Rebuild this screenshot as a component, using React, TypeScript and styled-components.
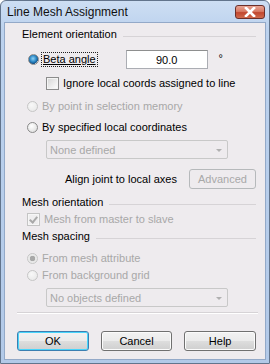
import React from 'react'
import styled, { createGlobalStyle } from 'styled-components'

const GlobalStyle = createGlobalStyle`
	html, body {
		margin: 0;
		padding: 0;
		background: #ffffff;
	}
	* {
		box-sizing: border-box;
	}
`

const COLOR = {
	BODY: '#eeebee',
	TEXT: '#000000',
	DISABLED: '#a8a8a8',
	FRAME: '#b4cbe8',
	EDGE: '#62748c',
	LINE: '#d6d3d6'
}

export default function App() {
	return (
		<>
			<GlobalStyle />
			<Window>
				<TitleBar>
					<Title>Line Mesh Assignment</Title>
					<CloseButton>
						<svg width="12" height="10" viewBox="0 0 12 10">
							<path d="M2 1 L10 9 M10 1 L2 9" stroke="#ffffff" strokeWidth="2.6" strokeLinecap="square" />
						</svg>
					</CloseButton>
				</TitleBar>
				<Body>
					<Header $mt={4}>Element orientation</Header>

					<Row $mt={9} $indent={23} $h={19}>
						<Radio $checked />
						<FocusLabel>Beta angle</FocusLabel>
						<AngleInput>90.0</AngleInput>
						<Degree>°</Degree>
					</Row>
					<Row $mt={7} $indent={41}>
						<Checkbox />
						<Label>Ignore local coords assigned to line</Label>
					</Row>
					<Row $mt={9} $indent={22}>
						<Radio $disabled />
						<Label $disabled>By point in selection memory</Label>
					</Row>
					<Row $mt={7} $indent={22}>
						<Radio />
						<Label>By specified local coordinates</Label>
					</Row>
					<Row $mt={6} $indent={41} $h={19}>
						<Dropdown>
							<span>None defined</span>
							<Arrow />
						</Dropdown>
					</Row>
					<Row $mt={10} $indent={56} $h={20}>
						<Label $gap={12}>Align joint to local axes</Label>
						<SmallButton>Advanced</SmallButton>
					</Row>

					<Header $mt={6}>Mesh orientation</Header>
					<Row $mt={3} $indent={22}>
						<Checkbox $checked $disabled />
						<Label $disabled>Mesh from master to slave</Label>
					</Row>

					<Header $mt={3}>Mesh spacing</Header>
					<Row $mt={8} $indent={22}>
						<Radio $checked $disabled />
						<Label $disabled>From mesh attribute</Label>
					</Row>
					<Row $mt={3} $indent={22}>
						<Radio $disabled />
						<Label $disabled>From background grid</Label>
					</Row>
					<Row $mt={6} $indent={41} $h={19}>
						<Dropdown>
							<span>No objects defined</span>
							<Arrow />
						</Dropdown>
					</Row>

					<Separator />

					<ButtonRow>
						<DialogButton $default>OK</DialogButton>
						<DialogButton>Cancel</DialogButton>
						<DialogButton>Help</DialogButton>
					</ButtonRow>
				</Body>
			</Window>
		</>
	)
}

const Window = styled.div`
	width: 270px;
	height: 364px;
	display: flex;
	flex-direction: column;
	border: 1px solid ${COLOR.EDGE};
	border-radius: 6px 6px 0 0;
	background: linear-gradient(180deg, #cddef3 0%, #bcd2ee 8%, #b2c9e8 100%);
	padding: 0 3px 3px;
	font-family: 'Liberation Sans', Arial, sans-serif;
	font-size: 11px;
	color: ${COLOR.TEXT};
`

const TitleBar = styled.div`
	height: 21px;
	flex: none;
	display: flex;
	align-items: center;
	justify-content: space-between;
	padding: 0 1px 0 3px;
`

const Title = styled.div`
	font-size: 12px;
	color: #101010;
	margin-top: 1px;
`

const CloseButton = styled.div`
	width: 30px;
	height: 14px;
	margin-top: 1px;
	display: flex;
	align-items: center;
	justify-content: center;
	border: 1px solid #6b2f2a;
	border-radius: 3px;
	background: linear-gradient(180deg, #e8a493 0%, #d87a64 45%, #c2472f 55%, #cf6a4d 100%);
`

const Body = styled.div`
	flex: 1;
	display: flex;
	flex-direction: column;
	background: ${COLOR.BODY};
	border: 1px solid #93a9c8;
	padding-left: 17px;
	padding-right: 9px;
`

const Header = styled.div<{ $mt: number }>`
	height: 14px;
	margin-top: ${({ $mt }) => $mt}px;
	display: flex;
	align-items: center;
	gap: 6px;
	white-space: nowrap;
	&::after {
		content: '';
		flex: 1;
		height: 1px;
		margin-top: 5px;
		background: ${COLOR.LINE};
	}
`

const Row = styled.div<{ $mt: number; $indent: number; $h?: number }>`
	height: ${({ $h }) => $h ?? 14}px;
	margin-top: ${({ $mt }) => $mt}px;
	padding-left: ${({ $indent }) => $indent - 17}px;
	display: flex;
	align-items: center;
	white-space: nowrap;
`

const Label = styled.span<{ $disabled?: boolean; $gap?: number }>`
	color: ${({ $disabled }) => ($disabled ? COLOR.DISABLED : COLOR.TEXT)};
	margin-left: 4px;
	margin-right: ${({ $gap }) => $gap ?? 0}px;
`

const FocusLabel = styled.span`
	margin-left: 3px;
	padding: 0 1px;
	height: 13px;
	line-height: 12px;
	outline: 1px dotted #202020;
	text-decoration: underline;
	text-decoration-thickness: 1px;
	text-underline-offset: 1px;
`

const Radio = styled.span<{ $checked?: boolean; $disabled?: boolean }>`
	width: 11px;
	height: 11px;
	flex: none;
	border-radius: 50%;
	border: 1px solid ${({ $disabled }) => ($disabled ? '#c6c6c6' : '#8a8a8a')};
	background: ${({ $checked, $disabled }) =>
		$checked && !$disabled
			? 'radial-gradient(circle at 45% 40%, #8fd3f7 0%, #2a86c4 45%, #124f86 70%, #e4e4e4 72%, #f6f6f6 100%)'
			: $checked && $disabled
			? 'radial-gradient(circle at 50% 50%, #a8a8a8 0%, #a8a8a8 42%, #e6e6e6 46%, #f4f4f4 100%)'
			: $disabled
			? 'radial-gradient(circle at 40% 35%, #f8f8f8 0%, #e6e6e6 100%)'
			: 'radial-gradient(circle at 40% 35%, #ffffff 0%, #d8d8d8 100%)'};
`

const Checkbox = styled.span<{ $checked?: boolean; $disabled?: boolean }>`
	width: 13px;
	height: 13px;
	flex: none;
	border: 1px solid ${({ $disabled }) => ($disabled ? '#c4c4c4' : '#8c8c8c')};
	background: ${({ $disabled }) =>
		$disabled ? '#efeeef' : 'linear-gradient(135deg, #d4d4d4 0%, #eeeeee 60%, #ffffff 100%)'};
	box-shadow: inset 0 0 0 1px ${({ $disabled }) => ($disabled ? '#f6f6f6' : '#f4f4f4')};
	position: relative;
	&::after {
		content: '';
		display: ${({ $checked }) => ($checked ? 'block' : 'none')};
		position: absolute;
		left: 3px;
		top: 1px;
		width: 3px;
		height: 6px;
		border: solid #a9a9a9;
		border-width: 0 2px 2px 0;
		transform: rotate(40deg);
	}
`

const AngleInput = styled.div`
	width: 82px;
	height: 19px;
	margin-left: 29px;
	border: 1px solid #abadb3;
	border-top-color: #8e8f8f;
	background: #ffffff;
	display: flex;
	align-items: center;
	justify-content: center;
`

const Degree = styled.span`
	margin-left: 11px;
	margin-top: -4px;
`

const Dropdown = styled.div`
	width: 182px;
	height: 19px;
	border: 1px solid #c8c8c8;
	border-radius: 2px;
	background: ${COLOR.BODY};
	color: ${COLOR.DISABLED};
	display: flex;
	align-items: center;
	justify-content: space-between;
	padding: 0 5px 0 3px;
`

const Arrow = styled.span`
	width: 0;
	height: 0;
	border-left: 3px solid transparent;
	border-right: 3px solid transparent;
	border-top: 3px solid #b0b0b0;
	margin-top: 1px;
`

const SmallButton = styled.div`
	width: 70px;
	height: 20px;
	border: 1px solid #b6b9bb;
	border-radius: 3px;
	background: ${COLOR.BODY};
	color: ${COLOR.DISABLED};
	display: flex;
	align-items: center;
	justify-content: center;
`

const Separator = styled.div`
	height: 2px;
	margin: 5px 0 0 -5px;
	border-top: 1px solid ${COLOR.LINE};
	border-bottom: 1px solid #ffffff;
	width: 241px;
`

const ButtonRow = styled.div`
	margin: 17px 0 0 -5px;
	display: flex;
	gap: 12px;
`

const DialogButton = styled.div<{ $default?: boolean }>`
	width: 72px;
	height: 20px;
	border: 1px solid ${({ $default }) => ($default ? '#3c7fb1' : '#707070')};
	border-radius: 3px;
	background: linear-gradient(180deg, #f2f2f2 0%, #ebebeb 48%, #dddddd 52%, #cfcfcf 100%);
	box-shadow: inset 0 0 0 1px ${({ $default }) => ($default ? '#48d5fb' : '#fbfbfb')};
	display: flex;
	align-items: center;
	justify-content: center;
`
